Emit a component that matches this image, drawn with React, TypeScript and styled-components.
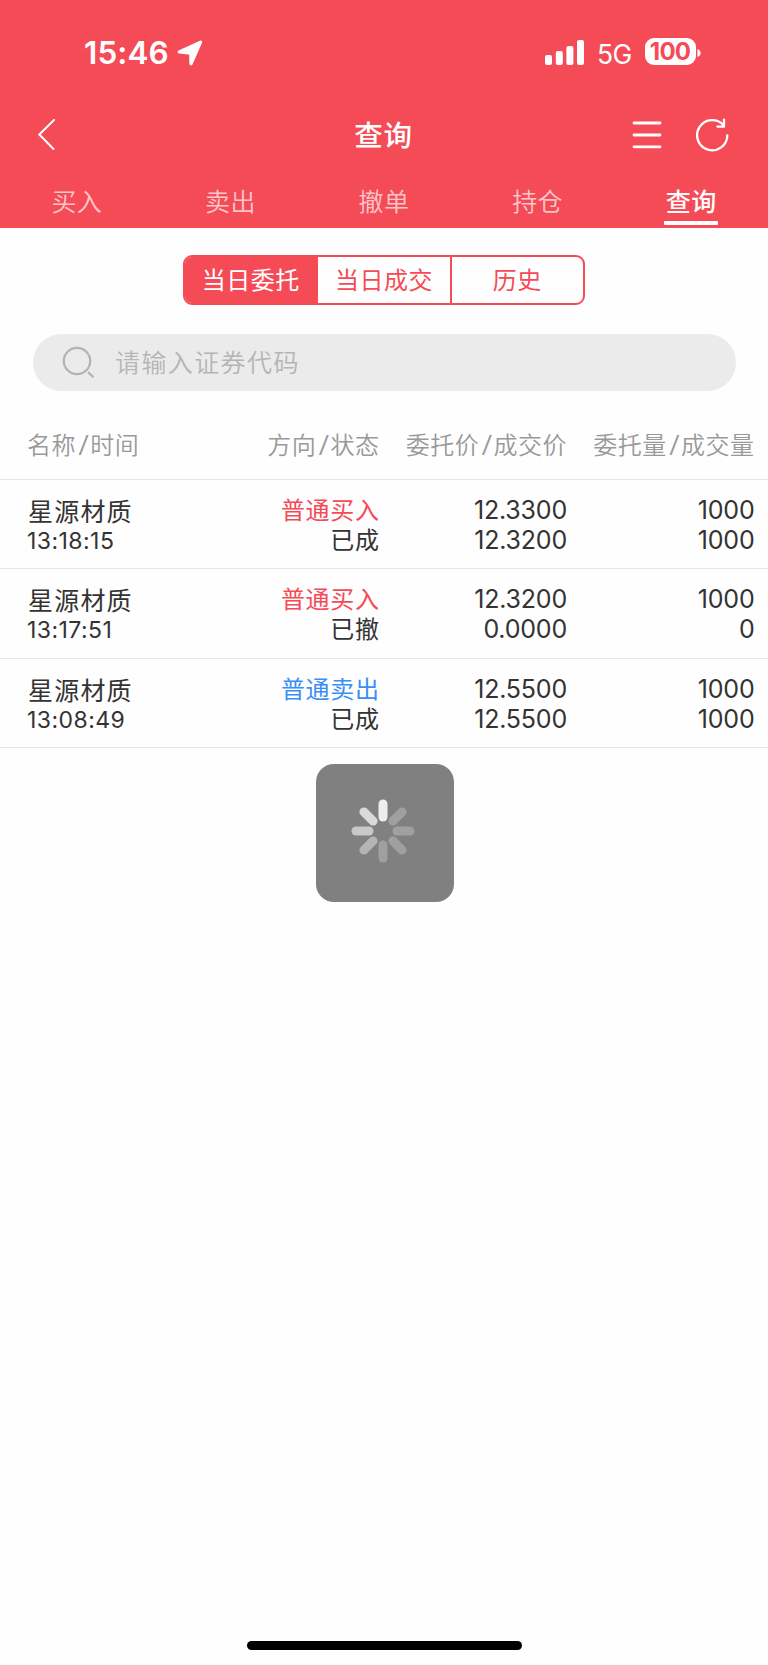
import React from "react";
import styled, { createGlobalStyle } from "styled-components";

const RED = "#f54b57";
const BLUE = "#3a8ef6";
const INK = "#333333";

const GlobalStyle = createGlobalStyle`
  * { box-sizing: border-box; }
  body {
    margin: 0;
    background: #fefefe;
    color: ${INK};
    font-family: Inter, "Noto Sans CJK SC", sans-serif;
    -webkit-font-smoothing: antialiased;
  }
`;

const Screen = styled.div`
  position: relative;
  display: flex;
  flex-direction: column;
  width: 768px;
  height: 1665px;
  overflow: hidden;
`;

const Header = styled.header`
  display: flex;
  flex-direction: column;
  height: 228px;
  background: ${RED};
  color: #fff;
`;

const StatusBar = styled.div`
  display: flex;
  align-items: center;
  justify-content: space-between;
  height: 105px;
  padding: 0 67px 0 84px;
`;

const StatusGroup = styled.div`
  display: flex;
  align-items: center;
`;

const Clock = styled.span`
  font-size: 31.5px;
  font-weight: 600;
  line-height: 40px;
  margin-right: 8px;
  letter-spacing: 0.1px;
`;

const Network = styled.span`
  margin: 2px 13px 0 13px;
  font-size: 26.5px;
  line-height: 32px;
  letter-spacing: -0.4px;
`;

const Battery = styled.span`
  width: 51px;
  height: 27px;
  margin-top: -2px;
  padding-right: 1px;
  border-radius: 9px;
  background: #fff;
  color: ${RED};
  font-size: 24px;
  font-weight: 700;
  line-height: 28px;
  letter-spacing: -0.8px;
  text-align: center;
`;

const NavBar = styled.div`
  display: grid;
  grid-template-columns: 1fr auto 1fr;
  align-items: center;
  height: 60px;
  padding: 0 39px 0 38px;
`;

const Title = styled.h1`
  margin: 0;
  padding-top: 2px;
  font-size: 28.5px;
  font-weight: 500;
  line-height: 40px;
  letter-spacing: 0.8px;
`;

const NavActions = styled.div`
  display: flex;
  align-items: center;
  justify-content: flex-end;
  gap: 34px;
`;

const Tabs = styled.nav`
  display: flex;
  height: 63px;
`;

const Tab = styled.div<{ $active?: boolean }>`
  display: flex;
  flex: 1;
  flex-direction: column;
  align-items: center;
  padding-top: 18px;
  font-size: 25px;
  line-height: 38px;
  letter-spacing: 0.4px;
  font-weight: ${(p) => (p.$active ? 500 : 350)};
  color: ${(p) => (p.$active ? "#fff" : "rgba(255,255,255,0.7)")};
  &::after {
    content: "";
    width: 54px;
    height: 4px;
    border-radius: 1px;
    background: ${(p) => (p.$active ? "#fff" : "transparent")};
  }
`;

const Segmented = styled.div`
  display: flex;
  align-self: center;
  width: 402px;
  height: 50px;
  margin-top: 27px;
  border: 2px solid ${RED};
  border-radius: 9px;
  overflow: hidden;
`;

const Segment = styled.div<{ $active?: boolean }>`
  flex: 1;
  font-size: 24px;
  line-height: 47px;
  letter-spacing: 0.5px;
  text-align: center;
  background: ${(p) => (p.$active ? RED : "transparent")};
  color: ${(p) => (p.$active ? "#fff" : RED)};
  & + & { border-left: 2px solid ${RED}; }
`;

const SearchBox = styled.div`
  display: flex;
  align-items: center;
  height: 57px;
  margin: 29px 32.5px 0;
  padding-left: 29.5px;
  border-radius: 29px;
  background: #ebebeb;
`;

const Placeholder = styled.span`
  margin-left: 20px;
  color: #b5b5b5;
  font-size: 25px;
  font-weight: 350;
  line-height: 36px;
  letter-spacing: 1.4px;
`;

const Row = styled.div`
  display: grid;
  grid-template-columns: 228px 151.5px 187.5px 187.5px;
  height: 89.33px;
  padding: 15px 13.5px 0 0;
  border-bottom: 1px solid #e6e6e6;
  & > :first-child { padding-left: 27px; text-align: left; }
`;

const HeadRow = styled(Row)`
  height: 89px;
  padding-top: 36px;
  color: #999;
  font-size: 24px;
  font-weight: 350;
  line-height: 36px;
  text-align: right;
  white-space: nowrap;
  letter-spacing: 0.5px;
`;

const HeadCell = styled.div``;

const Slash = styled.span`
  padding: 0 0.5px 0 2.5px;
  font-family: Roboto, sans-serif;
  font-size: 26px;
  font-weight: 400;
`;

const Cell = styled.div`
  display: flex;
  flex-direction: column;
  text-align: right;
  line-height: 30px;
  white-space: nowrap;
`;

const StatusCell = styled(Cell)`
  padding-top: 1px;
`;

const StockName = styled.span`
  padding-left: 1px;
  font-size: 25px;
  letter-spacing: 1.2px;
  line-height: 34px;
`;

const Time = styled.span`
  font-size: 23px;
  line-height: 24px;
  letter-spacing: 0.45px;
`;

const Status = styled.span<{ $color?: string }>`
  font-size: 24px;
  letter-spacing: 0.7px;
  margin-right: -0.2px;
  color: ${(p) => p.$color ?? INK};
`;

const Figure = styled.span`
  font-size: 25px;
  letter-spacing: -0.2px;
`;

const Loader = styled.div`
  position: absolute;
  top: 764px;
  left: 316px;
  display: flex;
  align-items: center;
  justify-content: center;
  width: 138px;
  height: 138px;
  padding: 0 4px 4px 0;
  border-radius: 18px;
  background: #808080;
`;

const HomeIndicator = styled.div`
  align-self: center;
  width: 275px;
  height: 9px;
  margin: auto 0 15px;
  border-radius: 5px;
  background: #000;
`;

const LocationIcon = () => (
  <svg width="26" height="26" viewBox="0 0 26 26">
    <path
      d="M2.2 11.9 23.6 2.1 14 23.8 13.7 13.2Z"
      fill="#fff"
      stroke="#fff"
      strokeWidth="3.2"
      strokeLinejoin="round"
    />
  </svg>
);

const SignalIcon = () => (
  <svg width="39" height="25" viewBox="0 0 39 25" fill="#fff">
    <rect x="0" y="15" width="7" height="10" rx="2" />
    <rect x="10.8" y="11" width="7" height="14" rx="2" />
    <rect x="21.4" y="6" width="7" height="19" rx="2" />
    <rect x="32" y="0" width="7" height="25" rx="2" />
  </svg>
);

const BatteryTip = () => (
  <svg width="5" height="8" viewBox="0 0 5 8">
    <path d="M1.4 0Q4.6 1.2 4.6 4T1.4 8Z" fill="#fff" />
  </svg>
);

const BackIcon = () => (
  <svg width="18" height="32" viewBox="0 0 18 32" fill="none" stroke="#fff" strokeWidth="2" strokeLinecap="round" strokeLinejoin="round">
    <path d="M16 1 1.3 15.5 15.5 30" />
  </svg>
);

const MenuIcon = () => (
  <svg width="30" height="28" viewBox="0 0 30 28" stroke="#fff" strokeWidth="2.8" strokeLinecap="round">
    <path d="M2 2H28M2 14H28M2 25.8H28" />
  </svg>
);

const RefreshIcon = () => (
  <svg width="33" height="34" viewBox="0 0 33 34" fill="none" stroke="#fff" strokeWidth="2.3" strokeLinecap="round" strokeLinejoin="round">
    <path d="M31.3 17.3A15.1 15.1 0 1 1 27.8 7.6M28 1.6V8.7H21.4" />
  </svg>
);

const SearchIcon = () => (
  <svg width="33" height="33" viewBox="0 0 33 33" fill="none" stroke="#b3b3b3" strokeWidth="2.2">
    <circle cx="15" cy="15" r="13.2" />
    <path d="M26 26 31.5 31.2" />
  </svg>
);

const SPOKES = ["#ededed", "#a0a0a0", "#a0a0a0", "#a0a0a0", "#a0a0a0", "#b4b4b4", "#c8c8c8", "#dadada"];

const Spinner = () => (
  <svg width="64" height="64" viewBox="-32 -32 64 64">
    {SPOKES.map((fill, i) => (
      <rect key={i} x="-4.5" y="-31.5" width="9" height="22" rx="4.5" fill={fill} transform={`rotate(${i * 45})`} />
    ))}
  </svg>
);

const TABS = ["买入", "卖出", "撤单", "持仓", "查询"];
const SEGMENTS = ["当日委托", "当日成交", "历史"];
const COLUMNS = [
  ["名称", "时间"],
  ["方向", "状态"],
  ["委托价", "成交价"],
  ["委托量", "成交量"],
];
const ORDERS = [
  { time: "13:18:15", side: "普通买入", color: RED, status: "已成", price: "12.3300", filled: "12.3200", qty: "1000", done: "1000" },
  { time: "13:17:51", side: "普通买入", color: RED, status: "已撤", price: "12.3200", filled: "0.0000", qty: "1000", done: "0" },
  { time: "13:08:49", side: "普通卖出", color: BLUE, status: "已成", price: "12.5500", filled: "12.5500", qty: "1000", done: "1000" },
];

export default function App() {
  return (
    <Screen>
      <GlobalStyle />
      <Header>
        <StatusBar>
          <StatusGroup>
            <Clock>15:46</Clock>
            <LocationIcon />
          </StatusGroup>
          <StatusGroup>
            <SignalIcon />
            <Network>5G</Network>
            <Battery>100</Battery>
            <BatteryTip />
          </StatusGroup>
        </StatusBar>
        <NavBar>
          <BackIcon />
          <Title>查询</Title>
          <NavActions>
            <MenuIcon />
            <RefreshIcon />
          </NavActions>
        </NavBar>
        <Tabs>
          {TABS.map((t, i) => (
            <Tab key={t} $active={i === 4}>{t}</Tab>
          ))}
        </Tabs>
      </Header>
      <Segmented>
        {SEGMENTS.map((s, i) => (
          <Segment key={s} $active={i === 0}>{s}</Segment>
        ))}
      </Segmented>
      <SearchBox>
        <SearchIcon />
        <Placeholder>请输入证券代码</Placeholder>
      </SearchBox>
      <HeadRow>
        {COLUMNS.map(([a, b]) => (
          <HeadCell key={a}>{a}<Slash>/</Slash>{b}</HeadCell>
        ))}
      </HeadRow>
      {ORDERS.map((o) => (
        <Row key={o.time}>
          <Cell>
            <StockName>星源材质</StockName>
            <Time>{o.time}</Time>
          </Cell>
          <StatusCell>
            <Status $color={o.color}>{o.side}</Status>
            <Status>{o.status}</Status>
          </StatusCell>
          <Cell>
            <Figure>{o.price}</Figure>
            <Figure>{o.filled}</Figure>
          </Cell>
          <Cell>
            <Figure>{o.qty}</Figure>
            <Figure>{o.done}</Figure>
          </Cell>
        </Row>
      ))}
      <Loader>
        <Spinner />
      </Loader>
      <HomeIndicator />
    </Screen>
  );
}
